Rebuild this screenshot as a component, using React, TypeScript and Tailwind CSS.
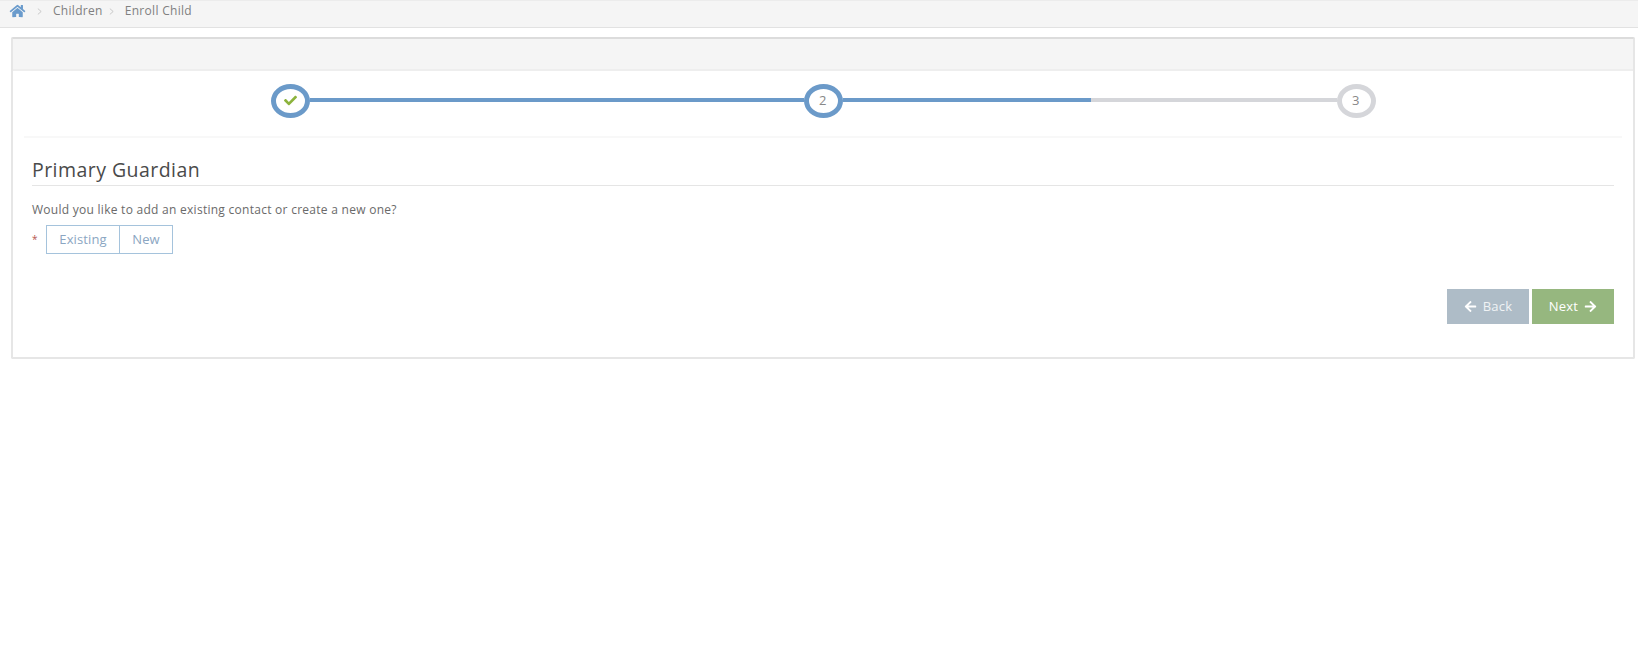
import React from 'react';
import { FaHome, FaArrowLeft, FaArrowRight, FaCheck } from 'react-icons/fa';

const Chevron = () => (
  <svg width="5" height="7" viewBox="0 0 6 8" className="text-[#c0c0c0]" fill="none" stroke="currentColor" strokeWidth="1">
    <path d="M1 0.5L5 4L1 7.5" />
  </svg>
);

const Step = ({ color, children }: { color: string; children: React.ReactNode }) => (
  <div className={`w-[39px] h-[34px] shrink-0 rounded-[50%] border-[5px] ${color} bg-white flex items-center justify-center text-[13px] tracking-[0.5px] text-[#888]`}>
    {children}
  </div>
);

export default function App() {
  return (
    <div className="min-h-screen bg-white font-['Open_Sans',sans-serif] text-[#555]">
      {/* Breadcrumb */}
      <div className="h-[28px] bg-[#f5f5f5] border-t border-t-[#ececec] border-b border-b-[#e2e2e2] flex items-center pl-[9px] pb-[6px] text-[12px] tracking-[0.3px] text-[#808080]">
        <FaHome className="text-[#6a9bcc] w-[17px] h-[14px]" />
        <span className="ml-[11px] mr-[11px]"><Chevron /></span>
        <span>Children</span>
        <span className="ml-[6px] mr-[11px]"><Chevron /></span>
        <span>Enroll Child</span>
      </div>

      {/* Panel */}
      <div className="mt-[9px] ml-[11px] w-[1624px] h-[322px] border-2 border-[#e6e6e6] border-t-[#dcdcdc] rounded-[2px] bg-white">
        <div className="h-[32px] bg-[#f5f5f5] border-b-2 border-[#eeeeee]" />

        <div className="mx-[11px] h-[67px] border-b-2 border-[#f8f8f8] flex items-center justify-center">
          <div className="flex items-center -translate-y-[3px]">
            <Step color="border-[#6b9ac9]">
              <FaCheck size={13} className="text-[#8cb33c]" />
            </Step>
            <div className="w-[494px] h-[4px] mb-[2px] bg-[#6b9ac9]" />
            <Step color="border-[#6b9ac9]">2</Step>
            <div className="w-[248px] h-[4px] mb-[2px] bg-[#6b9ac9]" />
            <div className="w-[246px] h-[4px] mb-[2px] bg-[#d5d6da]" />
            <Step color="border-[#d5d6da]">3</Step>
          </div>
        </div>

        <div className="pl-[19px] pr-[19px]">
          <h3 className="mt-[18px] pb-[2px] text-[19.5px] leading-[27px] tracking-[0.45px] text-[#4a4a4a] border-b border-[#e5e5e5]">
            Primary Guardian
          </h3>
          <p className="mt-[15px] text-[12px] leading-[18px] tracking-[0.27px] text-[#6a6a6a]">
            Would you like to add an existing contact or create a new one?
          </p>
          <div className="mt-[6px] flex items-center">
            <span className="w-[14px] text-[10px] text-[#b5564f]">*</span>
            <div className="flex h-[29px] border border-[#a5c3dc] text-[13px] tracking-[0.1px] text-[#8ba6c2]">
              <button className="w-[73px] border-r border-[#a5c3dc]">Existing</button>
              <button className="w-[52px]">New</button>
            </div>
          </div>
          <div className="mt-[35px] flex justify-end gap-[3px]">
            <button className="w-[82px] h-[35px] bg-[#aebcc7] text-[#f0f3f5] text-[13px] tracking-[0.2px] flex items-center justify-center gap-[6px]">
              <FaArrowLeft size={13} className="text-white" /> Back
            </button>
            <button className="w-[82px] h-[35px] bg-[#96b77f] text-white text-[13px] tracking-[0.2px] flex items-center justify-center gap-[6px]">
              Next <FaArrowRight size={13} />
            </button>
          </div>
        </div>
      </div>
    </div>
  );
}
